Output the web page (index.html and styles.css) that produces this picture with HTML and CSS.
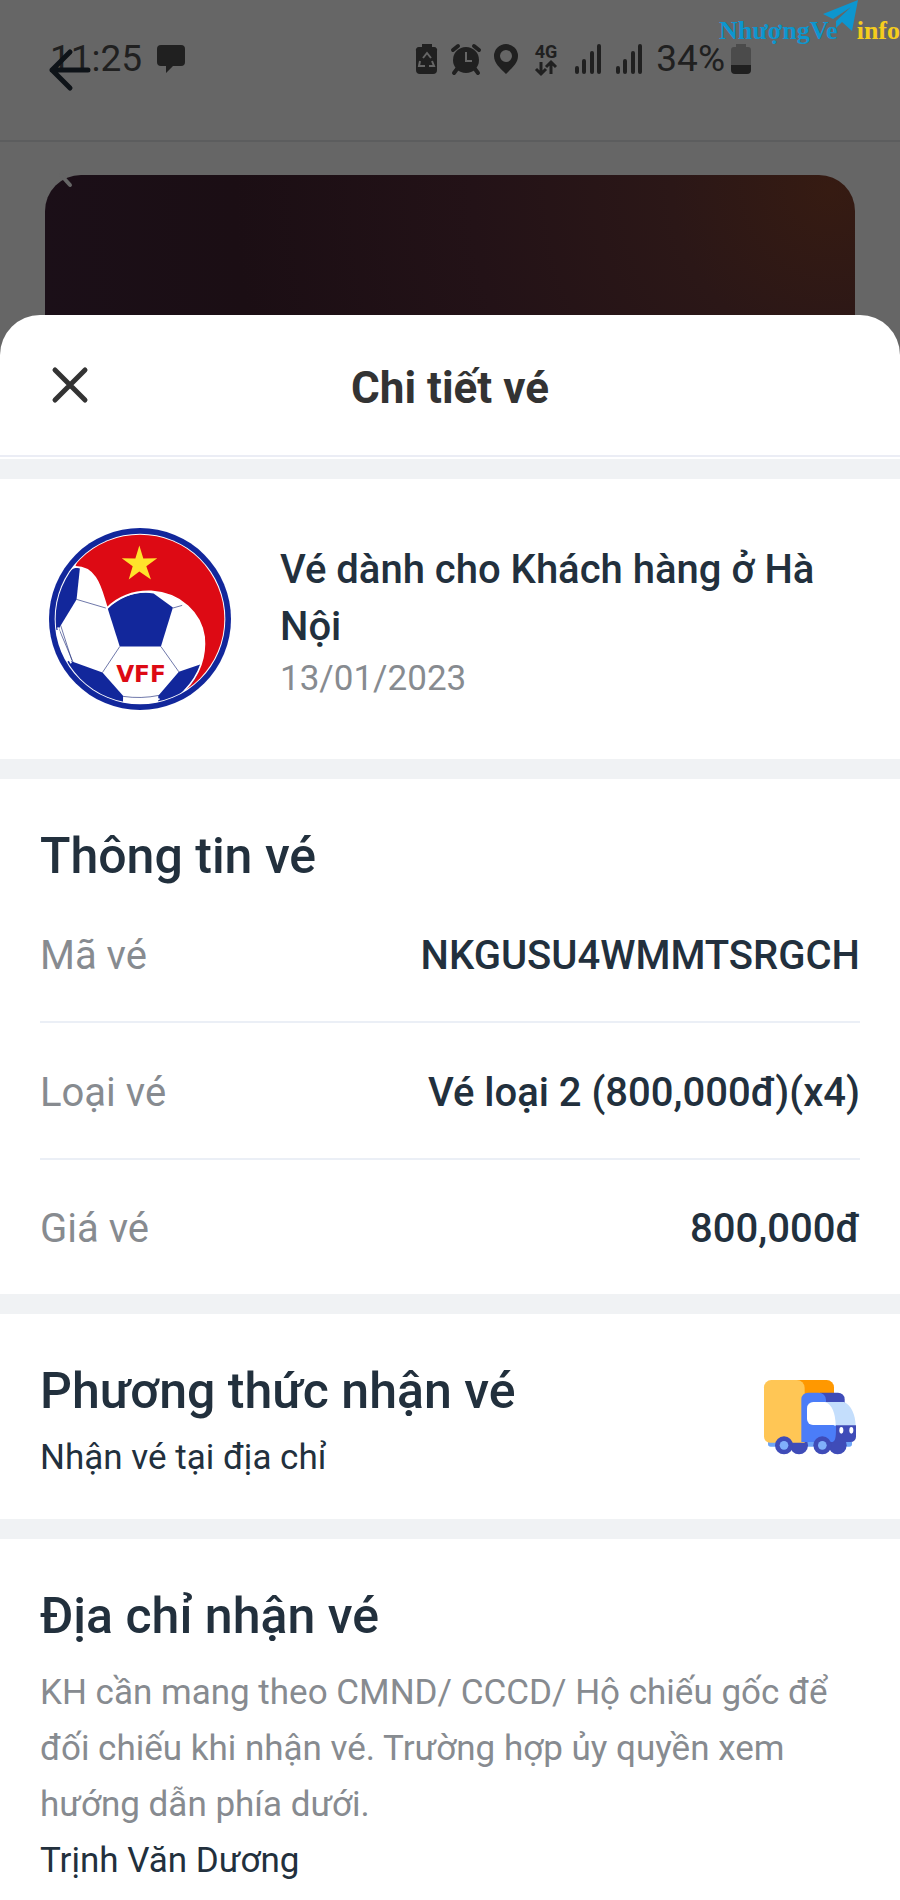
FILE: index.html
```
<!DOCTYPE html>
<html lang="vi">
<head>
	<meta charset="UTF-8">
	<meta name="viewport" content="width=device-width, initial-scale=1">
	<title>Chi tiết vé</title>
	<link rel="stylesheet" href="styles.css">
</head>
<body>
	<div class="backdrop">
		<div class="topbar">
			<span class="time">11:25</span>
			<svg class="message" width="30" height="30" viewBox="0 0 30 30"><path d="M5 1h20a4 4 0 0 1 4 4v13a4 4 0 0 1-4 4h-8l-7 7v-7H5a4 4 0 0 1-4-4V5a4 4 0 0 1 4-4z"/></svg>
			<div class="status">
				<svg width="22" height="32" viewBox="0 0 22 32">
					<path d="M6 1h10v3h2a3 3 0 0 1 3 4v19a4 4 0 0 1-4 4H4a4 4 0 0 1-4-4V8a3 3 0 0 1 3-4h3z"/>
					<path class="cut" d="M7 15l4-5 4 5M16 18l2 5h-5M4 18l-1 5h6"/>
				</svg>
				<svg width="30" height="32" viewBox="0 0 30 32">
					<circle cx="15" cy="17" r="13"/>
					<path class="line" d="M2 7l5-4M28 7l-5-4M6 26l-3 4M24 26l3 4"/>
					<path class="cut" d="M15 9v9h6"/>
				</svg>
				<svg width="24" height="32" viewBox="0 0 24 32"><path fill-rule="evenodd" d="M12 1a12 12 0 0 1 12 12c0 7-6 12-12 18C6 25 0 20 0 13A12 12 0 0 1 12 1zm0 6a6 6 0 1 0 0 12 6 6 0 0 0 0-12z"/></svg>
				<span class="network">4G
					<svg width="22" height="14" viewBox="0 0 22 14"><path class="arrows" d="M6 1v11M1 8l5 5 5-5M16 13V2M11 6l5-5 5 5"/></svg>
				</span>
				<svg width="28" height="32" viewBox="0 0 28 32"><path class="bars" d="M3 25v4M10 18v11M18 10v19M25 3v26"/></svg>
				<svg width="28" height="32" viewBox="0 0 28 32"><path class="bars" d="M3 25v4M10 18v11M18 10v19M25 3v26"/></svg>
				<span class="percent">34%</span>
				<svg width="20" height="32" viewBox="0 0 20 32">
					<path class="empty" d="M5 1h10v3h2a3 3 0 0 1 3 3v15H0V7a3 3 0 0 1 3-3h2z"/>
					<path d="M0 22h20v5a4 4 0 0 1-4 4H4a4 4 0 0 1-4-4z"/>
				</svg>
			</div>
			<button class="back" aria-label="Quay lại">
				<svg width="42" height="42" viewBox="0 0 42 42"><path d="M39 21H3M21 3L3 21l18 18"/></svg>
			</button>
			<div class="brand">
				<span class="brand-name">NhượngVe</span>
				<svg width="36" height="32" viewBox="0 0 36 32"><path d="M35 0L0 14l10 5L28 7 13 21v7l6-6 10 9z"/></svg>
				<span class="brand-info">info</span>
			</div>
		</div>
		<div class="banner">
			<svg width="30" height="14" viewBox="0 0 30 14"><path d="M16 0l9 10"/></svg>
		</div>
	</div>

	<main class="sheet">
		<header class="sheet-header">
			<button class="close" aria-label="Đóng">
				<svg width="36" height="36" viewBox="0 0 36 36"><path d="M3 3l30 30M33 3L3 33"/></svg>
			</button>
			<h1>Chi tiết vé</h1>
		</header>

		<section class="event">
			<svg class="logo" width="184" height="184" viewBox="54 51 554 552">
				<defs>
					<clipPath id="ball"><circle cx="331" cy="327" r="254"/></clipPath>
				</defs>
				<circle cx="331" cy="327" r="274" fill="#12279b"/>
				<circle cx="331" cy="327" r="257" fill="#fff"/>
				<g clip-path="url(#ball)">
					<path fill="#dd0a14" d="M136 170L180 60h420v400L470 540C510 495 530 440 524 380C514 310 455 250 365 244C310 242 262 262 232 294C216 250 206 170 136 170z"/>
					<path fill="#12279b" d="M150 174C140 170 128 174 118 184L60 270v90h24L140 268z"/>
					<path fill="#12279b" d="M234 296C275 258 320 243 372 250L430 292L394 410H270z"/>
					<path fill="#12279b" d="M118 452L218 488L280 558V590H180L90 470z"/>
					<path fill="#12279b" d="M448 486L512 464C505 505 488 525 462 542L420 590H386V558z"/>
					<path class="seam" d="M140 268L228 294M84 350L130 458M92 346L126 452M270 410L218 488M394 410L448 486M430 294L458 286M280 560Q335 568 388 557"/>
					<path class="edge" d="M132 170C206 166 216 250 232 294C262 262 310 242 365 244C455 250 514 310 524 380C530 440 510 495 466 542"/>
					<path class="edge" d="M84 352Q96 420 124 460M280 572Q335 578 390 568"/>
				</g>
				<path fill="#ffe32b" d="M329 106L341 145L383 144L350 168L364 208L329 184L297 208L309 168L276 144L317 145z"/>
				<text x="334" y="518">VFF</text>
			</svg>
			<div class="event-info">
				<h2>Vé dành cho Khách hàng ở Hà Nội</h2>
				<p>13/01/2023</p>
			</div>
		</section>

		<section class="info">
			<h2>Thông tin vé</h2>
			<dl>
				<div class="row">
					<dt>Mã vé</dt>
					<dd>NKGUSU4WMMTSRGCH</dd>
				</div>
				<div class="row">
					<dt>Loại vé</dt>
					<dd>Vé loại 2 (800,000đ)(x4)</dd>
				</div>
				<div class="row">
					<dt>Giá vé</dt>
					<dd>800,000đ</dd>
				</div>
			</dl>
		</section>

		<section class="method">
			<div>
				<h2>Phương thức nhận vé</h2>
				<p>Nhận vé tại địa chỉ</p>
			</div>
			<svg width="100" height="80" viewBox="60 102 300 240">
				<path fill="#6ea5f8" d="M84 276h252v6a8 8 0 0 1-8 8H92a8 8 0 0 1-8-8z"/>
				<circle cx="177" cy="286" r="27" fill="#3f4cb8"/>
				<circle cx="293" cy="286" r="27" fill="#3f4cb8"/>
				<path fill="#ff9800" d="M170 90h90a22 22 0 0 1 22 22v30H170z"/>
				<path fill="#ffc655" d="M94 90h76a24 24 0 0 1 24 24v164H90a18 18 0 0 1-18-18V112a22 22 0 0 1 22-22z"/>
				<path fill="#3f4cb8" d="M240 128h54a20 20 0 0 1 20 20v20h-60z"/>
				<path fill="#4b7df8" d="M204 128h32a22 22 0 0 1 22 22v20l32 56v50H184V148a20 20 0 0 1 20-20z"/>
				<path fill="#c4defc" d="M256 156h56c22 10 34 38 35 71h-65z"/>
				<path fill="#fff" d="M220 156h36c20 8 30 34 31 69h-68a18 18 0 0 1-18-18v-32a19 19 0 0 1 19-19z"/>
				<path fill="#3f4cb8" d="M288 226h60v34a16 16 0 0 1-16 16h-54c10-4 10-20 10-50z"/>
				<ellipse cx="304" cy="241" rx="6" ry="10" fill="#fff"/>
				<ellipse cx="334" cy="241" rx="6" ry="10" fill="#fff"/>
				<circle cx="132" cy="286" r="27" fill="#3f4cb8"/>
				<circle cx="132" cy="286" r="13" fill="#80b0fa"/>
				<circle cx="247" cy="286" r="27" fill="#3f4cb8"/>
				<circle cx="247" cy="286" r="13" fill="#80b0fa"/>
			</svg>
		</section>

		<section class="address">
			<h2>Địa chỉ nhận vé</h2>
			<p class="note">KH cần mang theo CMND/ CCCD/ Hộ chiếu gốc để đối chiếu khi nhận vé. Trường hợp ủy quyền xem hướng dẫn phía dưới.</p>
			<p>Trịnh Văn Dương</p>
		</section>
	</main>
</body>
</html>
```
FILE: styles.css
```
*{
	margin: 0;
	padding: 0;
	box-sizing: border-box;
}
body{
	font-family: Roboto, "Noto Sans", sans-serif;
	font-size: 35px;
	line-height: 56px;
	color: #22303d;
	background-color: #666;
}
svg{
	display: block;
	flex: none;
	overflow: visible;
}
button{
	border: none;
	background: none;
}
button path{
	fill: none;
	stroke-width: 5;
	stroke-linecap: round;
	stroke-linejoin: round;
}
/* dimmed screen behind the sheet */
.topbar{
	position: relative;
	display: flex;
	align-items: center;
	height: 142px;
	padding: 2px 149px 24px 50px;
	border-bottom: 2px solid #5c5d5e;
	color: #202020;
	fill: #202020;
}
.time,
.percent{
	font-size: 37px;
}
.message{
	margin-left: 14px;
}
.status{
	display: flex;
	align-items: center;
	gap: 13px;
	margin-left: auto;
}
.percent{
	margin-right: -7px;
}
.network{
	display: flex;
	flex-direction: column;
	align-items: center;
	margin: 0 4px;
	font-size: 18px;
	font-weight: 700;
	line-height: 18px;
}
.cut,
.line,
.bars,
.arrows{
	fill: none;
	stroke: #202020;
	stroke-width: 3;
}
.cut{
	stroke: #666;
	stroke-width: 2;
}
.line,
.bars{
	stroke-width: 4;
	stroke-linecap: round;
}
.empty{
	fill: #4b4b4b;
}
.back{
	position: absolute;
	left: 49px;
	top: 49px;
}
.back path{
	stroke: #0e1318;
}
.brand{
	position: absolute;
	right: 0;
	top: 0;
	display: flex;
	font-family: "Liberation Serif", serif;
	font-size: 26px;
	font-weight: 700;
	line-height: 62px;
	color: #0d96cf;
	fill: #0d96cf;
}
.brand svg{
	margin: 0 -2px 0 -15px;
}
.brand-info{
	color: #f5cd1d;
}
.banner{
	height: 140px;
	margin: 33px 45px 0;
	border-radius: 36px 36px 0 0;
	background: radial-gradient(circle at 97% 10%, #361b12 0, #2b1717 20%, #231217 45%, #1b0e14 75%, #1b0f18 100%);
}
.banner path{
	fill: none;
	stroke: #666;
	stroke-width: 4;
	stroke-linecap: round;
}
/* sheet */
.sheet{
	overflow: hidden;
	border-radius: 40px 40px 0 0;
	background-color: #fff;
}
.sheet-header{
	display: grid;
	grid-template-columns: 36px 1fr 36px;
	align-items: center;
	height: 142px;
	padding: 0 52px;
	border-bottom: 2px solid #ebedf5;
	margin-bottom: 2px;
}
.close path{
	stroke: #333;
}
h1{
	padding-top: 6px;
	font-size: 44px;
	font-weight: 700;
	line-height: 60px;
	text-align: center;
	color: #333;
}
section{
	padding: 47px 40px 0;
	border-top: 20px solid #f0f2f4;
}
h2{
	font-size: 50px;
	font-weight: 500;
	line-height: 60px;
}
.event{
	display: flex;
	align-items: center;
	gap: 48px;
	padding: 48px;
}
.event-info{
	padding-top: 6px;
}
.seam{
	fill: none;
	stroke: #26337f;
	stroke-width: 2;
}
.edge{
	fill: none;
	stroke: #fff;
	stroke-width: 5;
}
.logo text{
	font-family: "DejaVu Sans", sans-serif;
	font-size: 70px;
	font-weight: 700;
	text-anchor: middle;
	fill: #dd0a14;
}
.event h2{
	font-size: 40px;
	line-height: 57px;
}
.event p{
	line-height: 48px;
	color: #878b90;
}
.row{
	display: flex;
	justify-content: space-between;
	align-items: center;
	height: 137px;
	padding-top: 4px;
	font-size: 40px;
	border-bottom: 2px solid #ebeff6;
}
.row:last-child{
	height: 134px;
	border-bottom: none;
}
.row dt,
.note{
	color: #878b90;
}
.row dd{
	font-weight: 500;
}
.method{
	display: flex;
	justify-content: space-between;
	align-items: center;
	padding-bottom: 33px;
}
.method p{
	margin-top: 9px;
}
.address{
	padding-bottom: 12px;
}
.note{
	margin-top: 19px;
}
```
